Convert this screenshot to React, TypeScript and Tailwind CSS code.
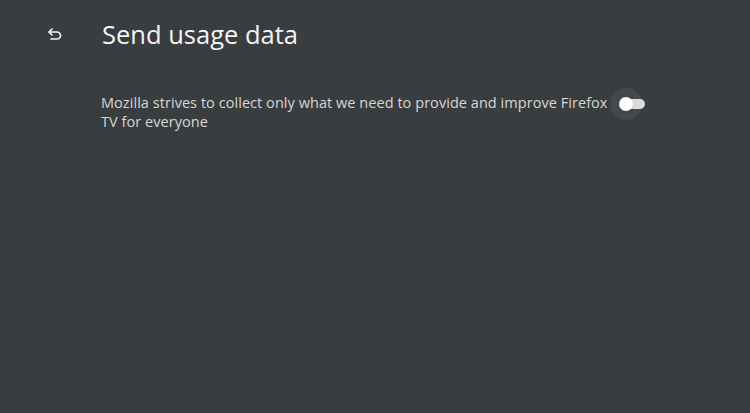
export default function App() {
  return (
    <div className="w-[750px] h-[413px] bg-[#3a3d40] text-[#e8e8e8] overflow-hidden" style={{ fontFamily: '"Open Sans", "Noto Sans", sans-serif' }}>
      <header className="flex items-center h-[70px] pl-[46px]">
        <svg width="18" height="18" viewBox="0 0 18 18" fill="none" stroke="#f2f2f2" strokeWidth="1.7" strokeLinecap="round" strokeLinejoin="round">
          <path d="M6 3 L3 6 L6 9" />
          <path d="M3.3 6 H11 a3.5 3.5 0 0 1 0 7 H5" />
        </svg>
        <h1 className="ml-[38px] text-[25.5px] leading-none text-[#f4f4f4] -mt-[1px]">Send usage data</h1>
      </header>
      <div className="flex items-start pl-[101px] pt-[23px]">
        <p className="w-[512px] text-[14.5px] leading-[19px] tracking-[0.05px] text-[#d6d6d6]">
          Mozilla strives to collect only what we need to provide and improve Firefox TV for everyone
        </p>
        <div className="relative ml-[-3px] mt-[-5px] w-[36px] h-[32px] flex items-center">
          <span className="absolute left-0 top-0 w-[32px] h-[32px] rounded-full bg-[#46494c]" />
          <span className="absolute left-[14px] top-[11px] w-[21px] h-[10px] rounded-full bg-[#dcdcdc]" />
          <span className="absolute left-[9px] top-[9px] w-[14px] h-[14px] rounded-full bg-white shadow" />
        </div>
      </div>
    </div>
  )
}
